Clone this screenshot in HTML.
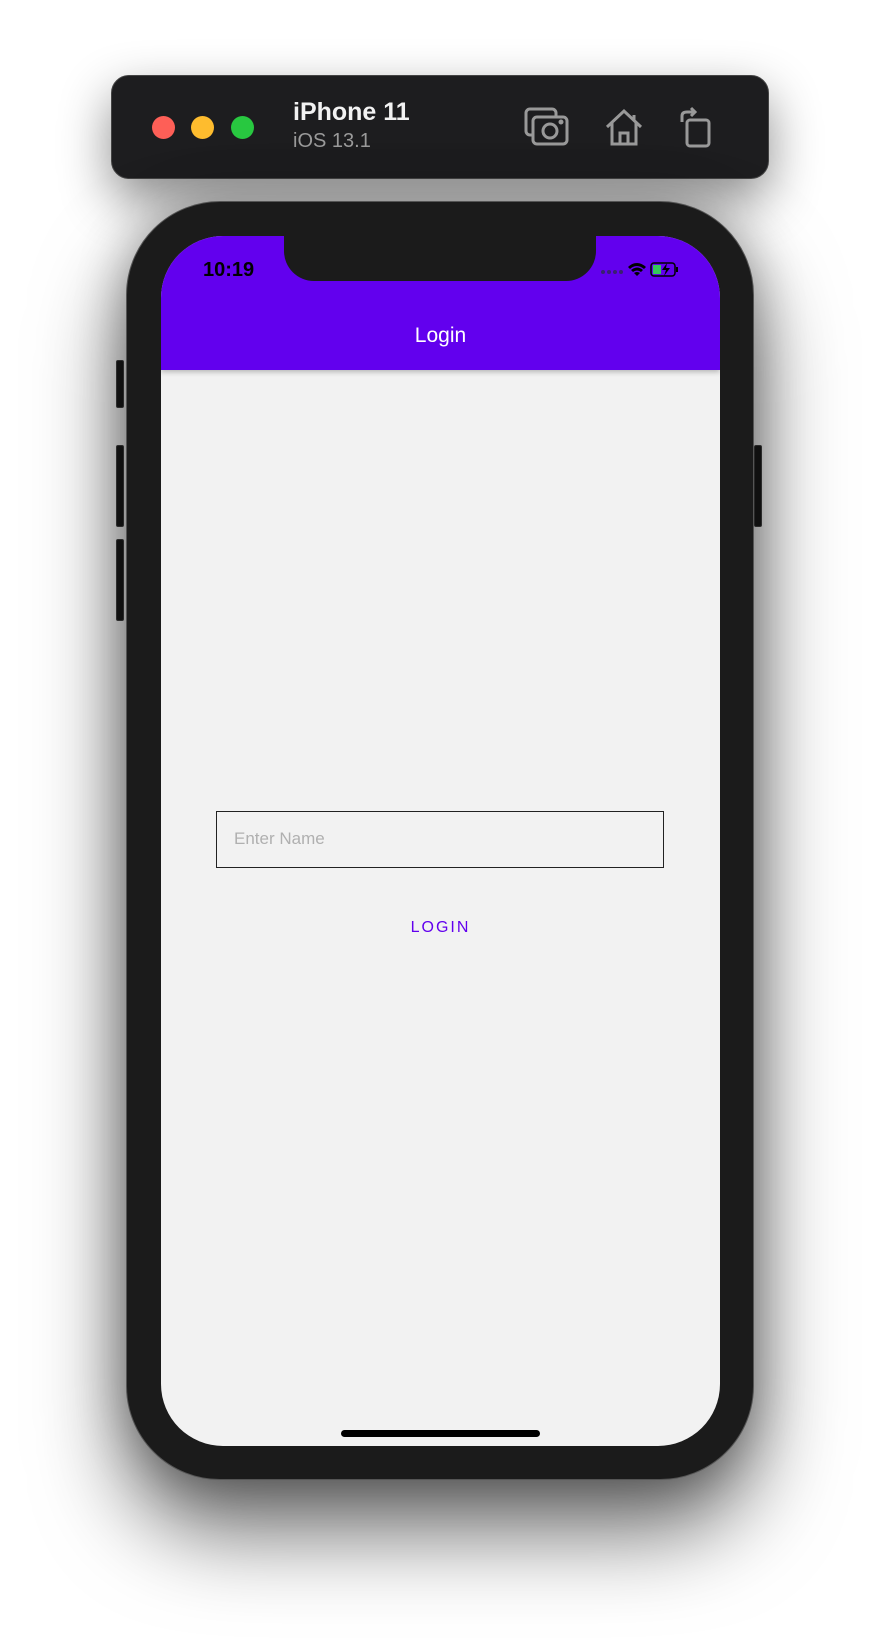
<!DOCTYPE html>
<html><head><meta charset="utf-8"><style>
*{margin:0;padding:0;box-sizing:border-box}
body{width:884px;height:1638px;background:#fff;position:relative;overflow:hidden;font-family:"Liberation Sans",sans-serif}
.tb{position:absolute;left:111px;top:75px;width:658px;height:104px;background:#1d1d1f;border-radius:18px;border:1px solid #444;box-shadow:0 20px 50px rgba(0,0,0,.45)}
.dot{position:absolute;top:116px;width:23px;height:23px;border-radius:50%}
.t1{position:absolute;left:293px;top:98px;color:#f2f2f2;font-weight:bold;font-size:25px}
.t2{position:absolute;left:293px;top:130px;color:#9a9a9a;font-size:20px}
.phone{position:absolute;left:126px;top:201px;width:628px;height:1279px;background:#1b1b1b;border-radius:94px;border:1px solid #555;box-shadow:0 50px 90px rgba(0,0,0,.6),0 0 50px rgba(0,0,0,.3)}
.screen{position:absolute;left:161px;top:236px;width:559px;height:1210px;background:#f2f2f2;border-radius:62px;overflow:hidden}
.nav{position:absolute;left:0;top:0;width:559px;height:134px;background:#6200ee;box-shadow:0 2px 5px rgba(0,0,0,.25)}
.notch{position:absolute;left:123px;top:-2px;width:312px;height:47px;background:#1b1b1b;border-radius:0 0 30px 30px}
.btn{position:absolute;background:#1b1b1b;border:1px solid #444;border-radius:2px}
</style></head><body>
<div class="tb"></div>
<div class="dot" style="left:152px;background:#fe5f57"></div>
<div class="dot" style="left:191px;background:#febc2e"></div>
<div class="dot" style="left:231px;background:#28c840"></div>
<div class="t1">iPhone 11</div>
<div class="t2">iOS 13.1</div>
<svg style="position:absolute;left:524px;top:107px" width="46" height="40" viewBox="0 0 46 40" fill="none" stroke="#999" stroke-width="3"><rect x="2" y="2" width="30" height="26" rx="4"/><rect x="9" y="10" width="34" height="27" rx="4" fill="#1d1d1f"/><circle cx="26" cy="24" r="7"/><circle cx="37" cy="15" r="1" fill="#999"/></svg>
<svg style="position:absolute;left:604px;top:107px" width="40" height="40" viewBox="0 0 40 40" fill="none" stroke="#999" stroke-width="3"><path d="M3 20 L20 4 L37 20 M8 16 V37 H32 V16 M16 37 V26 H24 V37" /><path d="M30 8 V14"/></svg>
<svg style="position:absolute;left:678px;top:106px" width="34" height="42" viewBox="0 0 34 42" fill="none" stroke="#999" stroke-width="3"><rect x="9" y="14" width="22" height="26" rx="3"/><path d="M4 16 V10 Q4 6 9 6 H16 M13 2 L17 6 L13 10"/></svg>
<div class="btn" style="left:116px;top:360px;width:8px;height:48px"></div>
<div class="btn" style="left:116px;top:445px;width:8px;height:82px"></div>
<div class="btn" style="left:116px;top:539px;width:8px;height:82px"></div>
<div class="btn" style="left:754px;top:445px;width:8px;height:82px"></div>
<div class="phone"></div>
<div class="screen">
 <div class="nav">
  <div style="position:absolute;left:42px;top:23px;font-size:20px;font-weight:bold;color:#000">10:19</div>
  <svg style="position:absolute;left:440px;top:23px" width="80" height="20" viewBox="0 0 80 20"><g fill="#3a2070"><circle cx="2" cy="13" r="2"/><circle cx="8" cy="13" r="2"/><circle cx="14" cy="13" r="2"/><circle cx="20" cy="13" r="2"/></g><path d="M27 8 Q36 0 45 8 L43 10 Q36 4 29 10Z M30 11 Q36 6 42 11 L40 13 Q36 10 32 13Z M33 14 Q36 12 39 14 L36 17Z" fill="#000"/><rect x="50" y="4" width="24" height="13" rx="3" fill="none" stroke="#000" stroke-width="1.5"/><rect x="52" y="6" width="8" height="9" fill="#34c759"/><path d="M66 4 L61 11 H65 L63 17 L69 9 H65Z" fill="#000"/><rect x="75" y="8" width="2" height="5" fill="#000"/></svg>
  <div style="position:absolute;left:0;width:559px;top:88px;text-align:center;color:#fff;font-size:21px">Login</div>
 </div>
 <div class="notch"></div>
 <div style="position:absolute;left:55px;top:575px;width:448px;height:57px;border:1.5px solid #222;"></div>
 <div style="position:absolute;left:73px;top:593px;color:#b0b0b0;font-size:17px">Enter Name</div>
 <div style="position:absolute;left:0;width:559px;top:683px;text-align:center;color:#6200ee;font-size:16px;letter-spacing:2px">LOGIN</div>
 <div style="position:absolute;left:180px;top:1194px;width:199px;height:7px;background:#000;border-radius:4px"></div>
</div>
</body></html>
